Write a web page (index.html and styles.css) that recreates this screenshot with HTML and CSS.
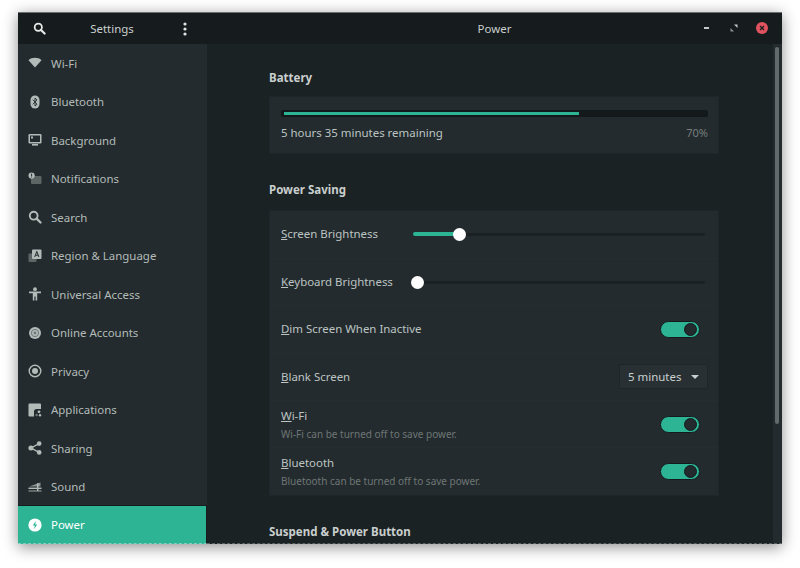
FILE: index.html
```html
<!DOCTYPE html>
<html>
<head>
  <meta charset="UTF-8">
  <title>Power</title>
  <link rel="stylesheet" href="styles.css">
</head>
<body>
  <div class="window">
    <header class="titlebar">
      <div class="titlebar-left">
        <svg class="head-icon" viewBox="0 0 14 14"><circle cx="5.7" cy="5.7" r="3.9" fill="none" stroke="#e6ebea" stroke-width="1.9"/><path d="M8.6 8.6l3.9 3.9" stroke="#e6ebea" stroke-width="2.3" stroke-linecap="round"/></svg>
        <span class="app-title">Settings</span>
        <svg class="head-menu" viewBox="0 0 4 14"><circle cx="2" cy="2" r="1.6"/><circle cx="2" cy="7" r="1.6"/><circle cx="2" cy="12" r="1.6"/></svg>
      </div>
      <div class="titlebar-main">
        <span class="page-title">Power</span>
        <div class="window-buttons">
          <span class="btn-min"></span>
          <svg class="btn-max" viewBox="0 0 8 8"><path d="M4 0.5h3.5v3.5z" fill="#c4cac9"/><path d="M4 7.5h-3.5v-3.5z" fill="#8b9291"/></svg>
          <span class="btn-close"><svg viewBox="0 0 6 6"><path d="M1 1l4 4M5 1l-4 4" stroke="#1b2022" stroke-width="1.4"/></svg></span>
        </div>
      </div>
    </header>
    <div class="body">
      <nav class="sidebar">
        <div class="side-row"><svg class="side-icon" viewBox="0 0 14 14"><path d="M0.5 4.2C2.2 2.6 4.4 1.8 7 1.8s4.8.8 6.5 2.4L7 11.6z"/></svg>Wi-Fi</div>
        <div class="side-row"><svg class="side-icon" viewBox="0 0 14 14"><rect x="2.5" y="0.5" width="9" height="13" rx="4.5"/><path d="M4.8 4.6l4.2 4.6L7 11V3l2 1.9-4.2 4.4" fill="none" stroke="#232b2e" stroke-width="0.9"/></svg>Bluetooth</div>
        <div class="side-row"><svg class="side-icon" viewBox="0 0 14 14"><rect x="0.5" y="1" width="13" height="9.5" rx="1.2"/><rect x="2" y="2.5" width="10" height="6.5" fill="#232b2e"/><rect x="3" y="3.5" width="2" height="2"/><rect x="4" y="11" width="6" height="1.6"/></svg>Background</div>
        <div class="side-row"><svg class="side-icon" viewBox="0 0 14 14"><rect x="3" y="4" width="10.5" height="8" rx="1" fill="#5e6665"/><circle cx="3.6" cy="3.6" r="3.1"/><rect x="3.1" y="1.6" width="1" height="2.4" fill="#232b2e"/><rect x="3.1" y="4.5" width="1" height="1" fill="#232b2e"/></svg>Notifications</div>
        <div class="side-row"><svg class="side-icon" viewBox="0 0 14 14"><circle cx="5.7" cy="5.7" r="3.9" fill="none" stroke="#b3bbb9" stroke-width="1.9"/><path d="M8.6 8.6l3.9 3.9" stroke="#b3bbb9" stroke-width="2.3" stroke-linecap="round"/></svg>Search</div>
        <div class="side-row"><svg class="side-icon" viewBox="0 0 14 14"><rect x="0.5" y="4.5" width="8" height="8.5" rx="1" fill="#5e6665"/><rect x="4" y="0.5" width="9.5" height="9.5" rx="1"/><path d="M6.7 8L8.8 2.4 10.9 8M7.5 6.2h2.6" fill="none" stroke="#232b2e" stroke-width="1"/></svg>Region &amp; Language</div>
        <div class="side-row"><svg class="side-icon" viewBox="0 0 14 14"><circle cx="7" cy="2.2" r="1.9"/><path d="M1 4.6h12v1.7H9.2V13.5H7.6V9.5H6.4v4H4.8V6.3H1z"/></svg>Universal Access</div>
        <div class="side-row"><svg class="side-icon" viewBox="0 0 14 14"><circle cx="7" cy="7" r="6"/><circle cx="7" cy="7" r="3.6" fill="none" stroke="#6f7776" stroke-width="1"/><circle cx="7" cy="7" r="1.4" fill="#6f7776"/></svg>Online Accounts</div>
        <div class="side-row"><svg class="side-icon" viewBox="0 0 14 14"><circle cx="7" cy="7" r="5.8" fill="none" stroke="#b3bbb9" stroke-width="1.4"/><circle cx="7" cy="7" r="3"/></svg>Privacy</div>
        <div class="side-row"><svg class="side-icon" viewBox="0 0 14 14"><path d="M1.5 0.5h10.5a1 1 0 0 1 1 1V6H8.5A2.5 2.5 0 0 0 6 8.5V13.5H1.5a1 1 0 0 1-1-1v-11a1 1 0 0 1 1-1z"/><circle cx="11" cy="8.8" r="1.4"/><circle cx="8.6" cy="12" r="1.2" fill="#6f7776"/><circle cx="12" cy="12.2" r="1.2"/></svg>Applications</div>
        <div class="side-row"><svg class="side-icon" viewBox="0 0 14 14"><path d="M11.2 2.6L3 7l8.2 4.4" fill="none" stroke="#b3bbb9" stroke-width="1.4"/><circle cx="2.9" cy="7" r="2.5"/><circle cx="11.2" cy="2.6" r="2.3"/><circle cx="11.2" cy="11.4" r="2.3"/></svg>Sharing</div>
        <div class="side-row"><svg class="side-icon" viewBox="0 0 14 14"><path d="M1 6.5L12.5 2.5v4z" fill="#8b9291"/><rect x="0.5" y="7.6" width="13" height="1.4"/><rect x="0.5" y="10.4" width="13" height="1.2" fill="#8b9291"/><rect x="9" y="3" width="1.4" height="8"/></svg>Sound</div>
        <div class="side-row side-row-active"><svg class="side-icon" viewBox="0 0 14 14"><circle cx="7" cy="7" r="6.6" fill="#fff"/><path d="M7.8 3L4.8 7.6h2L6.2 11l3-4.6h-2z" fill="#2cb494"/></svg>Power</div>
      </nav>
      <main class="content">
        <div class="column">
          <h2 class="group-title battery-title">Battery</h2>
          <section class="card battery-card">
            <div class="level"><div class="level-fill"></div></div>
            <div class="battery-info"><span>5 hours 35 minutes remaining</span><span class="percent">70%</span></div>
          </section>

          <h2 class="group-title">Power Saving</h2>
          <section class="card">
            <div class="row">
              <span class="row-label"><u>S</u>creen Brightness</span>
              <div class="slider slider-screen"><div class="slider-fill"></div><div class="slider-knob"></div></div>
            </div>
            <div class="row">
              <span class="row-label"><u>K</u>eyboard Brightness</span>
              <div class="slider slider-keyboard"><div class="slider-knob"></div></div>
            </div>
            <div class="row">
              <span class="row-label"><u>D</u>im Screen When Inactive</span>
              <div class="toggle"><div class="toggle-knob"></div></div>
            </div>
            <div class="row">
              <span class="row-label"><u>B</u>lank Screen</span>
              <div class="combo">5 minutes<span class="combo-arrow"></span></div>
            </div>
            <div class="row">
              <div class="row-text">
                <span class="row-label"><u>W</u>i-Fi</span>
                <span class="row-sub">Wi-Fi can be turned off to save power.</span>
              </div>
              <div class="toggle"><div class="toggle-knob"></div></div>
            </div>
            <div class="row">
              <div class="row-text">
                <span class="row-label"><u>B</u>luetooth</span>
                <span class="row-sub">Bluetooth can be turned off to save power.</span>
              </div>
              <div class="toggle"><div class="toggle-knob"></div></div>
            </div>
          </section>

          <h2 class="group-title">Suspend &amp; Power Button</h2>
        </div>
        <div class="scrollbar"><div class="scroll-thumb"></div></div>
      </main>
    </div>
  </div>
</body>
</html>
```

FILE: styles.css
```css
html, body {
  margin: 0;
  padding: 0;
}

body {
  background-color: #fff;
  font-family: "Noto Sans", sans-serif;
  font-size: 11.45px;
  padding: 12px 18px;
  height: 568px;
  box-sizing: border-box;
  overflow: hidden;
}

.window {
  width: 764px;
  height: 532px;
  display: flex;
  flex-direction: column;
  overflow: hidden;
  background-color: #1b2224;
  border-top: 1px solid #6b6f70;
  box-sizing: border-box;
  box-shadow: 0 3px 14px rgba(0, 0, 0, 0.45);
}

.titlebar {
  flex: none;
  height: 31px;
  display: flex;
  background-color: #161b1d;
  color: #c9cfce;
}

.titlebar-left {
  width: 189px;
  display: flex;
  align-items: center;
  padding: 0 15px;
  box-sizing: border-box;
}

.head-icon {
  width: 13px;
  height: 13px;
}

.app-title {
  flex: 1;
  text-align: center;
  margin-right: 5px;
}

.head-menu {
  width: 4px;
  height: 14px;
  margin-right: 5px;
  fill: #dfe3e2;
}

.titlebar-main {
  flex: 1;
  position: relative;
  display: flex;
  align-items: center;
  justify-content: center;
}

.window-buttons {
  position: absolute;
  right: 14px;
  top: 9px;
  display: flex;
  align-items: center;
  gap: 18px;
}

.btn-min {
  width: 5px;
  height: 2px;
  margin-right: 3px;
  background-color: #c4cac9;
}

.btn-max {
  width: 8px;
  height: 8px;
}

.btn-close {
  width: 12px;
  height: 12px;
  border-radius: 50%;
  background-color: #e0535f;
  display: flex;
  align-items: center;
  justify-content: center;
}

.btn-close svg {
  width: 6px;
  height: 6px;
}

.body {
  flex: 1;
  min-height: 0;
  display: flex;
}

.sidebar {
  width: 189px;
  flex: none;
  display: flex;
  flex-direction: column;
  box-sizing: border-box;
  background-color: #232b2e;
  color: #b3bbb9;
}

.side-row {
  height: 38.5px;
  flex: none;
  display: flex;
  align-items: center;
  gap: 9px;
  padding-left: 10px;
  box-sizing: border-box;
}

.side-icon {
  width: 14px;
  height: 14px;
  fill: #b3bbb9;
  flex: none;
}

.side-row-active {
  height: 38px;
  background-color: #2cb494;
  color: #fff;
  border-right: 1px solid #161b1d;
  border-bottom: 1px dashed #7fd0bc;
  box-shadow: 0 -1px 0 #161b1d;
}

.content {
  flex: 1;
  min-width: 0;
  display: flex;
  justify-content: space-between;
  overflow: hidden;
  border-bottom: 1px dashed #5c6365;
}

.column {
  width: 450px;
  margin-left: 62px;
  padding-top: 26px;
  color: #bcc3c1;
}

.group-title {
  margin: 0 0 11.5px;
  font-size: 11.5px;
  line-height: 16px;
  font-weight: 700;
  color: #c9cfce;
}

.battery-title {
  margin-bottom: 10px;
}

.card {
  background-color: #232b2e;
  border: 1px solid #1f2629;
  margin-bottom: 28.5px;
}

.battery-card {
  height: 58px;
  box-sizing: border-box;
  padding: 13px 10px 0 11px;
  margin-bottom: 28px;
}

.level {
  height: 7px;
  border-radius: 2px;
  background-color: #141a1c;
  padding: 1px 2px;
  box-sizing: border-box;
  border: 1px solid #12171a;
}

.level-fill {
  height: 3px;
  width: 70%;
  background-color: #2cb494;
}

.battery-info {
  display: flex;
  justify-content: space-between;
  margin-top: 7px;
  line-height: 17px;
}

.percent {
  font-size: 11px;
  color: #767d7c;
}

.row {
  height: 47.4px;
  display: flex;
  align-items: center;
  justify-content: space-between;
  padding: 0 11px;
  box-sizing: border-box;
}

.row + .row {
  border-top: 1px solid #252d30;
}

.row-text {
  display: flex;
  flex-direction: column;
  gap: 4px;
}

.row-label {
  line-height: 16px;
  white-space: nowrap;
}

.row-sub {
  font-size: 10px;
  line-height: 13px;
  color: #6e7675;
}

.slider {
  height: 3px;
  margin-right: 2px;
  background-color: #1b2123;
  border-radius: 2px;
  display: flex;
  align-items: center;
  position: relative;
}

.slider-screen {
  width: 292px;
}

.slider-keyboard {
  width: 288px;
}

.slider-fill {
  width: 46px;
  height: 4px;
  border-radius: 2px;
  background-color: #2cb494;
}

.slider-knob {
  position: absolute;
  top: -5px;
  width: 13px;
  height: 13px;
  border-radius: 50%;
  background-color: #fff;
}

.slider-screen .slider-knob {
  left: 40px;
}

.slider-keyboard .slider-knob {
  left: -6px;
}

.toggle {
  width: 40px;
  height: 17px;
  margin-right: 7px;
  border-radius: 9px;
  background-color: #2cb494;
  border: 1px solid #151b1d;
  box-sizing: border-box;
  display: flex;
  justify-content: flex-end;
  align-items: center;
}

.toggle-knob {
  width: 11px;
  height: 11px;
  margin-right: 2px;
  border-radius: 50%;
  background-color: #232b2e;
  border: 1px solid #151b1d;
}

.combo {
  width: 89px;
  height: 25px;
  margin-right: -1px;
  box-sizing: border-box;
  padding: 0 8px;
  display: flex;
  align-items: center;
  justify-content: space-between;
  color: #c9cfce;
  background-color: #283034;
  border: 1px solid #1f2629;
  border-radius: 2px;
}

.combo-arrow {
  width: 0;
  height: 0;
  border-left: 4px solid transparent;
  border-right: 4px solid transparent;
  border-top: 4px solid #c9cfce;
}

.scrollbar {
  width: 9px;
  flex: none;
  padding: 3px 3px 0 2px;
  box-sizing: border-box;
  background-color: #232b2e;
}

.scroll-thumb {
  height: 377px;
  border-radius: 3px;
  background-color: #626a6c;
}
```
